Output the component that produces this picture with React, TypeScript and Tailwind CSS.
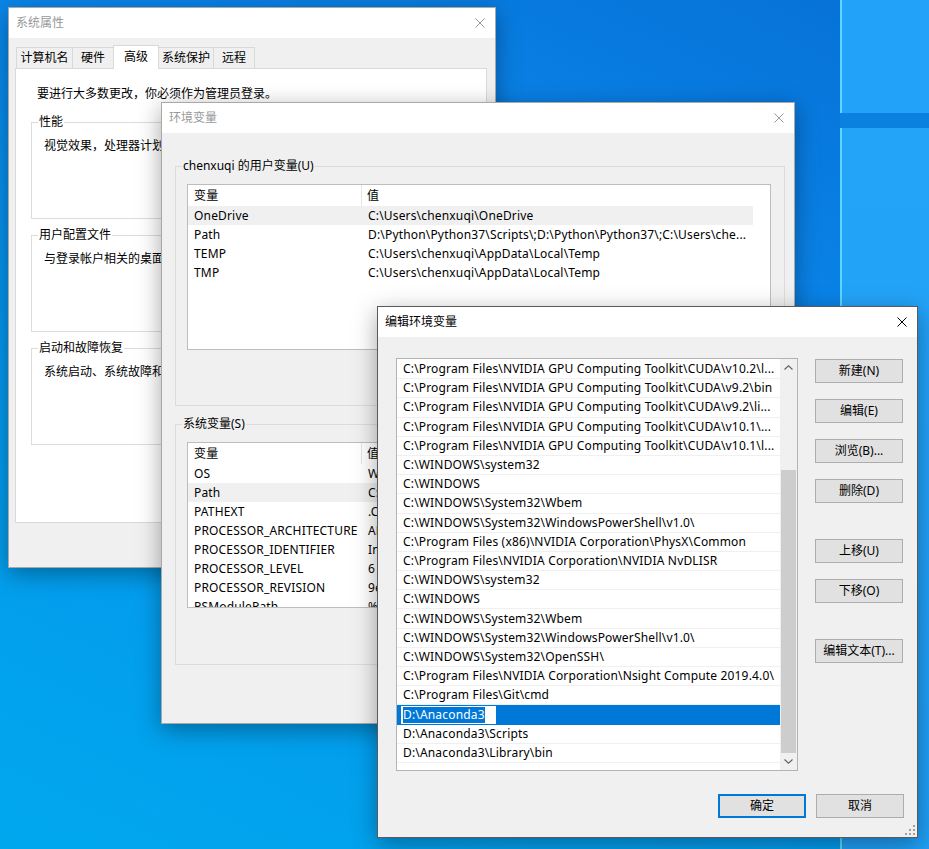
import React from "react";

const userVars = [
  ["OneDrive", "C:\\Users\\chenxuqi\\OneDrive"],
  ["Path", "D:\\Python\\Python37\\Scripts\\;D:\\Python\\Python37\\;C:\\Users\\che..."],
  ["TEMP", "C:\\Users\\chenxuqi\\AppData\\Local\\Temp"],
  ["TMP", "C:\\Users\\chenxuqi\\AppData\\Local\\Temp"],
];

const sysVars = [
  ["OS", "Windows_NT"],
  ["Path", "C:\\Program Files\\NVIDIA GPU Computing Toolkit\\CUDA\\v10.2\\bin;..."],
  ["PATHEXT", ".COM;.EXE;.BAT;.CMD;.VBS;.VBE;.JS;.JSE;.WSF;.WSH;.MSC"],
  ["PROCESSOR_ARCHITECTURE", "AMD64"],
  ["PROCESSOR_IDENTIFIER", "Intel64 Family 6 Model 158 Stepping 10, GenuineIntel"],
  ["PROCESSOR_LEVEL", "6"],
  ["PROCESSOR_REVISION", "9e0a"],
  ["PSModulePath", "%ProgramFiles%\\WindowsPowerShell\\Modules;..."],
];

const paths = [
  "C:\\Program Files\\NVIDIA GPU Computing Toolkit\\CUDA\\v10.2\\l...",
  "C:\\Program Files\\NVIDIA GPU Computing Toolkit\\CUDA\\v9.2\\bin",
  "C:\\Program Files\\NVIDIA GPU Computing Toolkit\\CUDA\\v9.2\\li...",
  "C:\\Program Files\\NVIDIA GPU Computing Toolkit\\CUDA\\v10.1\\...",
  "C:\\Program Files\\NVIDIA GPU Computing Toolkit\\CUDA\\v10.1\\l...",
  "C:\\WINDOWS\\system32",
  "C:\\WINDOWS",
  "C:\\WINDOWS\\System32\\Wbem",
  "C:\\WINDOWS\\System32\\WindowsPowerShell\\v1.0\\",
  "C:\\Program Files (x86)\\NVIDIA Corporation\\PhysX\\Common",
  "C:\\Program Files\\NVIDIA Corporation\\NVIDIA NvDLISR",
  "C:\\WINDOWS\\system32",
  "C:\\WINDOWS",
  "C:\\WINDOWS\\System32\\Wbem",
  "C:\\WINDOWS\\System32\\WindowsPowerShell\\v1.0\\",
  "C:\\WINDOWS\\System32\\OpenSSH\\",
  "C:\\Program Files\\NVIDIA Corporation\\Nsight Compute 2019.4.0\\",
  "C:\\Program Files\\Git\\cmd",
  "D:\\Anaconda3",
  "D:\\Anaconda3\\Scripts",
  "D:\\Anaconda3\\Library\\bin",
];

function CloseIcon({ active }: { active?: boolean }) {
  return (
    <svg width="10" height="10" viewBox="0 0 10 10" className={active ? "text-black" : "text-[#999]"}>
      <path d="M0.5 0.5L9.5 9.5M9.5 0.5L0.5 9.5" stroke="currentColor" strokeWidth="1" fill="none" />
    </svg>
  );
}

function Win({
  title,
  active,
  className,
  children,
}: {
  title: string;
  active?: boolean;
  className: string;
  children: React.ReactNode;
}) {
  return (
    <div
      className={`absolute flex flex-col border bg-[#f0f0f0] shadow-[0_6px_22px_rgba(0,0,0,0.35)] ${
        active ? "border-[#5a5a5a]" : "border-[#a8a8a8]"
      } ${className}`}
    >
      <div className="flex h-[30px] shrink-0 items-center justify-between bg-white pl-[7px] pr-[10px]">
        <span className={active ? "text-black" : "text-[#999]"}>{title}</span>
        <CloseIcon active={active} />
      </div>
      {children}
    </div>
  );
}

function Group({ label, className, children }: { label: string; className: string; children?: React.ReactNode }) {
  return (
    <fieldset className={`border border-[#dcdcdc] ${className}`}>
      <legend className="ml-[6px] px-[1px] leading-[16px]">{label}</legend>
      {children}
    </fieldset>
  );
}

function ListView({ rows, selected }: { rows: string[][]; selected: number }) {
  return (
    <div className="ml-[11px] mt-[10px] h-[166px] w-[584px] overflow-hidden border border-[#bdbdbd] bg-white tracking-[0.17px]">
      <div className="flex h-[21px] w-[565px] items-center">
        <div className="h-full w-[174px] border-r border-[#e5e5e5] pl-[6px] leading-[21px]">变量</div>
        <div className="pl-[5px]">值</div>
      </div>
      {rows.map(([k, v], i) => (
        <div
          key={i}
          className={`flex h-[19px] w-[565px] items-center whitespace-nowrap ${i === selected ? "bg-[#f0f0f0]" : ""}`}
        >
          <div className="w-[174px] shrink-0 pl-[6px]">{k}</div>
          <div className="pl-[6px]">{v}</div>
        </div>
      ))}
    </div>
  );
}

function Btn({ children, primary, className = "" }: { children: React.ReactNode; primary?: boolean; className?: string }) {
  return (
    <div
      className={`flex h-[24px] w-[88px] items-center justify-center bg-[#e1e1e1] ${
        primary ? "border-2 border-[#0078d7]" : "border border-[#adadad]"
      } ${className}`}
    >
      {children}
    </div>
  );
}

function Chevron({ up }: { up?: boolean }) {
  return (
    <svg width="9" height="5" viewBox="0 0 9 5">
      <path d={up ? "M0.5 4.5L4.5 0.8L8.5 4.5" : "M0.5 0.5L4.5 4.2L8.5 0.5"} stroke="#606060" strokeWidth="1.1" fill="none" />
    </svg>
  );
}

const tabs = ["计算机名", "硬件", "高级", "系统保护", "远程"];
const tabW = ["w-[57px]", "w-[42px]", "w-[46px]", "w-[56px]", "w-[42px]"];

export default function App() {
  return (
    <div className="relative h-[849px] w-[929px] overflow-hidden bg-[linear-gradient(205deg,#0670d6_0%,#0a84e8_30%,#0596ec_60%,#00a8ee_100%)] font-['Noto_Sans','Noto_Sans_CJK_SC',sans-serif] text-[12px] text-black">
      {/* wallpaper logo panes */}
      <div className="absolute left-[840px] top-0 h-[113px] w-[89px] border-l-2 border-[#5ad8fb] bg-[#22a2f8]" />
      <div className="absolute left-[840px] top-[113px] h-[15px] w-[89px] bg-[#0a80df]" />
      <div className="absolute left-[840px] top-[128px] h-[721px] w-[89px] border-l-2 border-[#5ad8fb] bg-[linear-gradient(180deg,#24a4f9,#1f9ff5)]" />

      {/* 系统属性 */}
      <Win title="系统属性" className="left-[8px] top-[7px] h-[561px] w-[488px]">
        <div className="px-[6px] pt-[7px]">
          <div className="flex h-[23px] items-end pl-[2px]">
            {tabs.map((t, i) =>
              i === 2 ? (
                <div
                  key={t}
                  className={`relative z-10 -mb-px -ml-px flex h-[24px] items-start justify-center border border-b-0 border-[#d9d9d9] bg-white pt-[2px] ${tabW[i]}`}
                >
                  {t}
                </div>
              ) : (
                <div
                  key={t}
                  className={`-ml-px flex h-[21px] items-center justify-center border border-b-0 border-[#d9d9d9] bg-[#f0f0f0] ${tabW[i]}`}
                >
                  {t}
                </div>
              )
            )}
          </div>
          <div className="flex h-[455px] w-[472px] flex-col border border-[#d9d9d9] bg-white px-[15px] pt-[17px]">
            <div className="ml-[6px] leading-[16px]">要进行大多数更改，你必须作为管理员登录。</div>
            <Group label="性能" className="mt-[12px] h-[105px] w-[440px]">
              <div className="mt-[8px] pl-[12px] leading-[16px]">视觉效果，处理器计划，内存使用，以及虚拟内存</div>
            </Group>
            <Group label="用户配置文件" className="mt-[8px] h-[105px] w-[440px]">
              <div className="mt-[8px] pl-[12px] leading-[16px]">与登录帐户相关的桌面设置</div>
            </Group>
            <Group label="启动和故障恢复" className="mt-[8px] h-[105px] w-[440px]">
              <div className="mt-[8px] pl-[12px] leading-[16px]">系统启动、系统故障和调试信息</div>
            </Group>
          </div>
        </div>
      </Win>

      {/* 环境变量 */}
      <Win title="环境变量" className="left-[161px] top-[102px] h-[622px] w-[634px]">
        <div className="flex flex-col pl-[13px] pt-[25px]">
          <Group label="chenxuqi 的用户变量(U)" className="h-[248px] w-[610px]">
            <ListView rows={userVars} selected={0} />
          </Group>
          <Group label="系统变量(S)" className="mt-[10px] h-[249px] w-[610px]">
            <ListView rows={sysVars} selected={1} />
          </Group>
        </div>
      </Win>

      {/* 编辑环境变量 */}
      <Win title="编辑环境变量" active className="left-[377px] top-[306px] h-[532px] w-[541px]">
        <div className="flex flex-col pl-[18px] pr-[13px] pt-[21px]">
          <div className="flex gap-[17px]">
            <div className="flex h-[413px] w-[402px] border border-[#b4b4b4] bg-white">
              <div className="flex flex-1 flex-col overflow-hidden pt-px tracking-[0.17px]">
                {paths.map((p, i) =>
                  i === 18 ? (
                    <div key={i} className="flex h-[19.2px] shrink-0 items-center bg-[#0078d7] pl-[4px]">
                      <div className="flex h-[18px] w-[95px] items-center border border-white bg-white pl-px">
                        <span className="bg-[#0078d7] leading-[16px] text-white">{p}</span>
                      </div>
                    </div>
                  ) : (
                    <div
                      key={i}
                      className="flex h-[19.2px] shrink-0 items-center whitespace-nowrap border-b border-[#f0f0f0] pl-[6px]"
                    >
                      {p}
                    </div>
                  )
                )}
              </div>
              <div className="flex w-[17px] flex-col bg-[#f0f0f0]">
                <div className="flex h-[17px] items-center justify-center">
                  <Chevron up />
                </div>
                <div className="flex flex-1 flex-col px-[1px]">
                  <div className="h-[94px]" />
                  <div className="flex-1 bg-[#cdcdcd]" />
                </div>
                <div className="flex h-[17px] items-center justify-center">
                  <Chevron />
                </div>
              </div>
            </div>
            <div className="flex w-[88px] flex-col pt-px">
              <Btn>新建(N)</Btn>
              <Btn className="mt-[16px]">编辑(E)</Btn>
              <Btn className="mt-[16px]">浏览(B)...</Btn>
              <Btn className="mt-[16px]">删除(D)</Btn>
              <Btn className="mt-[36px]">上移(U)</Btn>
              <Btn className="mt-[16px]">下移(O)</Btn>
              <Btn className="mt-[36px]">编辑文本(T)...</Btn>
            </div>
          </div>
          <div className="mt-[23px] flex justify-end gap-[10px]">
            <Btn primary>确定</Btn>
            <Btn>取消</Btn>
          </div>
        </div>
        <svg width="10" height="10" viewBox="0 0 10 10" className="absolute bottom-[2px] right-[2px]">
          <g fill="#a0a0a0">
            <rect x="8" y="0" width="2" height="2" />
            <rect x="4" y="4" width="2" height="2" />
            <rect x="8" y="4" width="2" height="2" />
            <rect x="0" y="8" width="2" height="2" />
            <rect x="4" y="8" width="2" height="2" />
            <rect x="8" y="8" width="2" height="2" />
          </g>
        </svg>
      </Win>
    </div>
  );
}
